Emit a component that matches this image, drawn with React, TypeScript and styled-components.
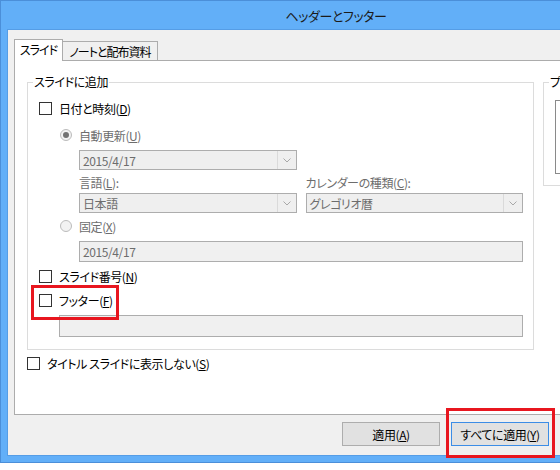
import React from "react";
import styled, { createGlobalStyle } from "styled-components";

const Global = createGlobalStyle`
  html, body { margin: 0; padding: 0; background: #fff; }
  body {
    font-family: "Noto Sans CJK JP", "Noto Sans", sans-serif;
    font-size: 12px;
    color: #000;
    font-feature-settings: "palt" 1;
    letter-spacing: -0.4px;
  }
  * { box-sizing: border-box; }
`;

const Stage = styled.div`
  position: relative;
  width: 560px;
  height: 470px;
  overflow: hidden;
  background: #fff;
`;

const Frame = styled.div`
  width: 672px;
  height: 463px;
  background: #62aff8;
  border: 1px solid #4b8fd9;
  padding: 0 6px 6px;
  display: flex;
  flex-direction: column;
`;

const TitleBar = styled.div`
  height: 28px;
  flex: none;
  display: flex;
  align-items: center;
  justify-content: center;
  font-size: 13px;
  color: #1b1b1b;
`;

const Client = styled.div`
  flex: 1;
  background: #f0f0f0;
  border: 1px solid #559de6;
  padding: 9px 6px 9px;
  display: flex;
  flex-direction: column;
`;

const TabStrip = styled.div`
  height: 22px;
  display: flex;
  align-items: flex-end;
  flex: none;
`;

const Tab = styled.div<{ $active?: boolean; $width: number }>`
  position: relative;
  z-index: ${(p) => (p.$active ? 2 : 1)};
  width: ${(p) => p.$width}px;
  height: ${(p) => (p.$active ? "22px" : "19px")};
  margin-bottom: ${(p) => (p.$active ? "0" : "1px")};
  margin-left: ${(p) => (p.$active ? "0" : "-1px")};
  padding-bottom: ${(p) => (p.$active ? "2px" : "0")};
  background: ${(p) => (p.$active ? "#fff" : "#f0f0f0")};
  border: 1px solid #acacac;
  border-bottom: none;
  display: flex;
  align-items: center;
  justify-content: center;
  white-space: nowrap;
  letter-spacing: -1px;
`;

const Panel = styled.div`
  margin-top: -1px;
  height: 355px;
  flex: none;
  background: #fff;
  border: 1px solid #acacac;
  padding: 13px 12px 0;
  display: flex;
  gap: 9px;
  align-items: flex-start;
`;

const LeftColumn = styled.div`
  width: 507px;
  flex: none;
  display: flex;
  flex-direction: column;
`;

const GroupBox = styled.fieldset<{ $width?: number }>`
  margin: 0;
  padding: 0;
  border: 1px solid #dcdcdc;
  min-width: 0;
  width: ${(p) => (p.$width ? `${p.$width}px` : "auto")};
`;

const Legend = styled.legend`
  margin-left: 5px;
  padding: 0 1px;
  line-height: 16px;
  font-size: 12px;
  white-space: nowrap;
`;

const GroupBody = styled.div<{ $pb: number }>`
  padding: 9px 10px ${(p) => p.$pb}px 11px;
  display: flex;
  flex-direction: column;
`;

const CheckRow = styled.label<{ $mt?: number }>`
  height: 18px;
  margin-top: ${(p) => p.$mt ?? 0}px;
  display: flex;
  align-items: center;
  gap: 7px;
  white-space: nowrap;
`;

const CheckBox = styled.span`
  width: 13px;
  height: 13px;
  flex: none;
  border: 1px solid #333;
  background: #fff;
`;

const SubBlock = styled.div<{ $indent: number }>`
  margin-left: ${(p) => p.$indent}px;
  display: flex;
  flex-direction: column;
`;

const RadioRow = styled.div<{ $mt?: number }>`
  height: 18px;
  margin-top: ${(p) => p.$mt ?? 0}px;
  display: flex;
  align-items: center;
  gap: 7px;
  color: #6d6d6d;
  white-space: nowrap;
`;

const Radio = styled.span<{ $on?: boolean }>`
  width: 12px;
  height: 12px;
  flex: none;
  border-radius: 50%;
  border: 1px solid #bcbcbc;
  background: #f2f2f2;
  display: flex;
  align-items: center;
  justify-content: center;
  &::after {
    content: "";
    display: ${(p) => (p.$on ? "block" : "none")};
    width: 6px;
    height: 6px;
    border-radius: 50%;
    background: #727272;
  }
`;

const PairGrid = styled.div<{ $mt?: number; $h: number }>`
  margin-top: ${(p) => p.$mt ?? 0}px;
  height: ${(p) => p.$h}px;
  display: grid;
  grid-template-columns: 1fr 1fr;
  column-gap: 9px;
  align-items: center;
`;

const FieldLabel = styled.span`
  color: #6d6d6d;
  white-space: nowrap;
`;

const Combo = styled.div`
  height: 20px;
  border: 1px solid #adadad;
  background: #efefef;
  display: flex;
  align-items: center;
  color: #6d6d6d;
`;

const ComboText = styled.span`
  flex: 1;
  padding-left: 3px;
  white-space: nowrap;
`;

const ComboArrow = styled.span`
  width: 19px;
  height: 100%;
  flex: none;
  border-left: 1px solid #dadada;
  display: flex;
  align-items: center;
  justify-content: center;
`;

const TextBox = styled.div<{ $mt?: number; $h: number }>`
  margin-top: ${(p) => p.$mt ?? 0}px;
  height: ${(p) => p.$h}px;
  border: 1px solid #adadad;
  background: #f0f0f0;
  color: #6d6d6d;
  padding-left: 3px;
  display: flex;
  align-items: center;
`;

const PreviewBox = styled.div`
  margin-top: 1px;
  height: 74px;
  border: 1px solid #8a8a8a;
  background: #fff;
`;

const ButtonRow = styled.div`
  margin-top: 7px;
  display: flex;
  justify-content: flex-end;
  gap: 11px;
`;

const Button = styled.button<{ $default?: boolean }>`
  width: 98px;
  height: 24px;
  margin: 0;
  padding: 0;
  font: inherit;
  letter-spacing: inherit;
  color: #000;
  background: #e1e1e1;
  border: 1px solid ${(p) => (p.$default ? "#3c8de6" : "#adadad")};
  display: flex;
  align-items: center;
  justify-content: center;
`;

const Key = styled.span`
  text-decoration: underline;
  text-underline-offset: 1px;
`;

const Highlight = styled.div<{ $x: number; $y: number; $w: number; $h: number }>`
  position: absolute;
  left: ${(p) => p.$x}px;
  top: ${(p) => p.$y}px;
  width: ${(p) => p.$w}px;
  height: ${(p) => p.$h}px;
  border: 3px solid #e8161f;
  pointer-events: none;
`;

const Chevron = () => (
  <svg width="8" height="5" viewBox="0 0 8 5">
    <polyline points="0.5,0.5 4,4 7.5,0.5" fill="none" stroke="#a8a8a8" strokeWidth="1" />
  </svg>
);

const ComboBox = ({ value }: { value: string }) => (
  <Combo>
    <ComboText>{value}</ComboText>
    <ComboArrow>
      <Chevron />
    </ComboArrow>
  </Combo>
);

export default function App() {
  return (
    <Stage>
      <Global />
      <Frame>
        <TitleBar>ヘッダーとフッター</TitleBar>
        <Client>
          <TabStrip>
            <Tab $active $width={49}>
              スライド
            </Tab>
            <Tab $width={96}>ノートと配布資料</Tab>
          </TabStrip>
          <Panel>
            <LeftColumn>
              <GroupBox>
                <Legend>スライドに追加</Legend>
                <GroupBody $pb={12}>
                  <CheckRow>
                    <CheckBox />
                    <span>
                      日付と時刻(<Key>D</Key>)
                    </span>
                  </CheckRow>
                  <SubBlock $indent={21}>
                    <RadioRow $mt={9}>
                      <Radio $on />
                      <span>
                        自動更新(<Key>U</Key>)
                      </span>
                    </RadioRow>
                    <SubBlock $indent={19}>
                      <PairGrid $mt={6} $h={20}>
                        <ComboBox value="2015/4/17" />
                      </PairGrid>
                      <PairGrid $mt={3} $h={18}>
                        <FieldLabel>
                          言語(<Key>L</Key>):
                        </FieldLabel>
                        <FieldLabel>
                          カレンダーの種類(<Key>C</Key>):
                        </FieldLabel>
                      </PairGrid>
                      <PairGrid $mt={2} $h={20}>
                        <ComboBox value="日本語" />
                        <ComboBox value="グレゴリオ暦" />
                      </PairGrid>
                    </SubBlock>
                    <RadioRow $mt={4}>
                      <Radio />
                      <span>
                        固定(<Key>X</Key>)
                      </span>
                    </RadioRow>
                    <SubBlock $indent={19}>
                      <TextBox $mt={6} $h={21}>
                        2015/4/17
                      </TextBox>
                    </SubBlock>
                  </SubBlock>
                  <CheckRow $mt={5}>
                    <CheckBox />
                    <span>
                      スライド番号(<Key>N</Key>)
                    </span>
                  </CheckRow>
                  <CheckRow $mt={6}>
                    <CheckBox />
                    <span>
                      フッター(<Key>F</Key>)
                    </span>
                  </CheckRow>
                  <SubBlock $indent={20}>
                    <TextBox $mt={6} $h={22} />
                  </SubBlock>
                </GroupBody>
              </GroupBox>
              <CheckRow $mt={4}>
                <CheckBox />
                <span>
                  タイトル スライドに表示しない(<Key>S</Key>)
                </span>
              </CheckRow>
            </LeftColumn>
            <GroupBox $width={102}>
              <Legend>プレビュー</Legend>
              <GroupBody $pb={11}>
                <PreviewBox />
              </GroupBody>
            </GroupBox>
          </Panel>
          <ButtonRow>
            <Button>
              適用(<Key>A</Key>)
            </Button>
            <Button $default>
              すべてに適用(<Key>Y</Key>)
            </Button>
            <Button>キャンセル</Button>
          </ButtonRow>
        </Client>
      </Frame>
      <Highlight $x={31} $y={285} $w={88} $h={35} />
      <Highlight $x={446} $y={408} $w={109} $h={50} />
    </Stage>
  );
}
